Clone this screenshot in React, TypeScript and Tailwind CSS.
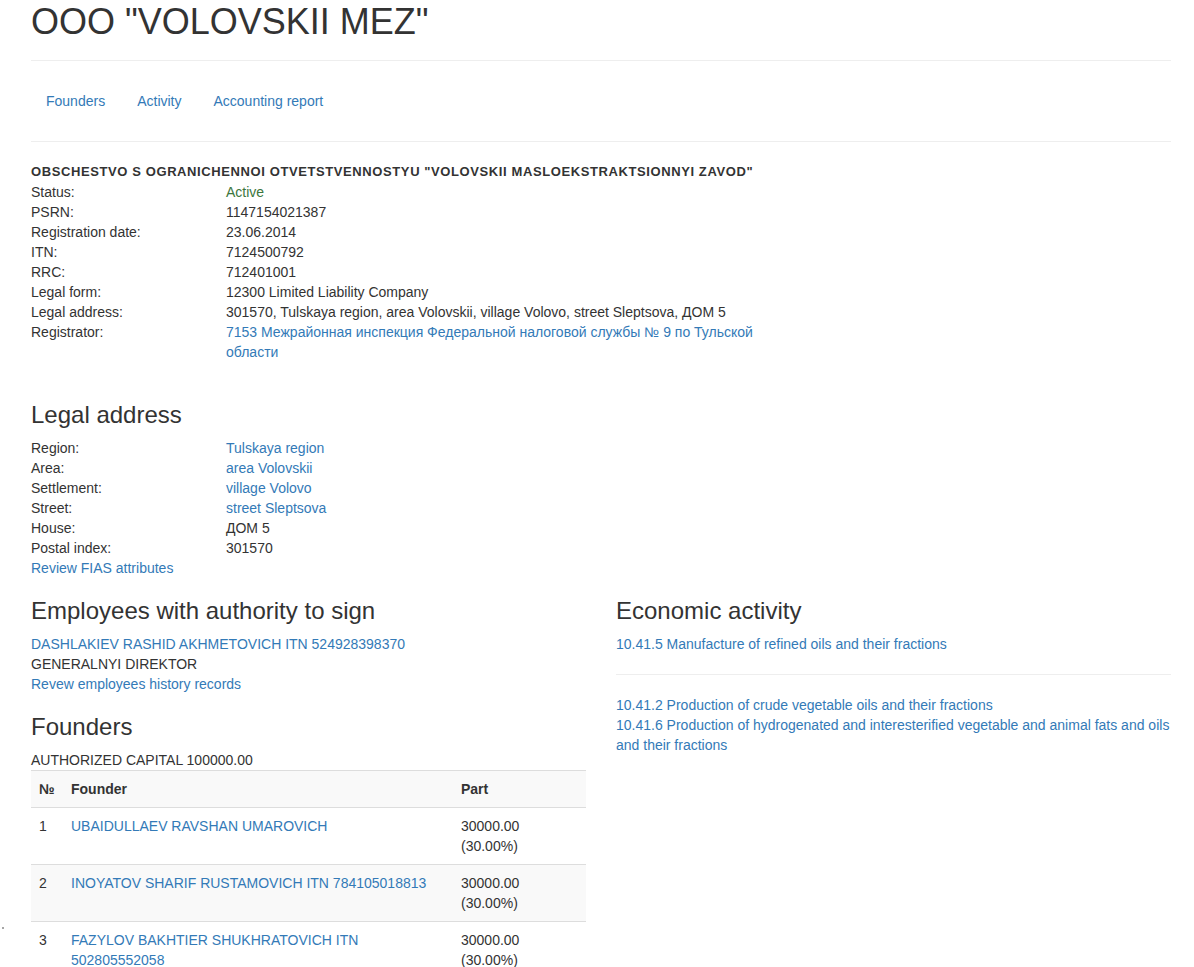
import React from "react";

const LINK = "text-[#337ab7]";

function Row({ label, children }: { label: string; children: React.ReactNode }) {
  return (
    <div className="flex">
      <div className="w-[195px] shrink-0">{label}</div>
      <div className="w-[556px]">{children}</div>
    </div>
  );
}

function H3({ children }: { children: React.ReactNode }) {
  return <h3 className="text-[24px] leading-[26px] mt-[20px] mb-[10px] font-normal text-[#333]">{children}</h3>;
}

export default function App() {
  const founders = [
    { n: 1, name: "UBAIDULLAEV RAVSHAN UMAROVICH" },
    { n: 2, name: "INOYATOV SHARIF RUSTAMOVICH ITN 784105018813" },
    { n: 3, name: "FAZYLOV BAKHTIER SHUKHRATOVICH ITN 502805552058" },
  ];
  return (
    <div
      className="relative bg-white min-h-[967px] text-[14px] leading-[20px] text-[#333]"
      style={{ fontFamily: '"Liberation Sans", Arial, "Noto Sans", sans-serif' }}
    >
      <div className="absolute left-[2px] top-[927px] w-[2px] h-[2px] rounded-full bg-[#888]" />
      <div className="pl-[31px] w-[1171px]">
        <h1 className="pt-[2px] text-[36px] leading-[39.6px] font-normal mb-[18px]">OOO "VOLOVSKII MEZ"</h1>
        <div className="border-t border-[#eee]" />
        <nav className="flex gap-[2px] my-[20px]">
          <a className={`${LINK} px-[15px] py-[10px]`}>Founders</a>
          <a className={`${LINK} px-[15px] py-[10px]`}>Activity</a>
          <a className={`${LINK} px-[15px] py-[10px]`}>Accounting report</a>
        </nav>
        <div className="border-t border-[#eee]" />

        <div className="mt-[20px] font-bold text-[13px] leading-[20px] tracking-[0.6px] whitespace-nowrap">
          OBSCHESTVO S OGRANICHENNOI OTVETSTVENNOSTYU "VOLOVSKII MASLOEKSTRAKTSIONNYI ZAVOD"
        </div>
        <div className="pb-[20px]">
          <Row label="Status:">
            <span className="text-[#3c763d]">Active</span>
          </Row>
          <Row label="PSRN:">1147154021387</Row>
          <Row label="Registration date:">23.06.2014</Row>
          <Row label="ITN:">7124500792</Row>
          <Row label="RRC:">712401001</Row>
          <Row label="Legal form:">12300 Limited Liability Company</Row>
          <Row label="Legal address:">301570, Tulskaya region, area Volovskii, village Volovo, street Sleptsova, ДОМ 5</Row>
          <Row label="Registrator:">
            <a className={LINK}>7153 Межрайонная инспекция Федеральной налоговой службы № 9 по Тульской области</a>
          </Row>
        </div>

        <H3>Legal address</H3>
        <div>
          <Row label="Region:"><a className={LINK}>Tulskaya region</a></Row>
          <Row label="Area:"><a className={LINK}>area Volovskii</a></Row>
          <Row label="Settlement:"><a className={LINK}>village Volovo</a></Row>
          <Row label="Street:"><a className={LINK}>street Sleptsova</a></Row>
          <Row label="House:">ДОМ 5</Row>
          <Row label="Postal index:">301570</Row>
          <div><a className={LINK}>Review FIAS attributes</a></div>
        </div>

        <div className="grid grid-cols-[555px_555px] gap-x-[30px]">
          <div>
            <H3>Employees with authority to sign</H3>
            <div><a className={LINK}>DASHLAKIEV RASHID AKHMETOVICH ITN 524928398370</a></div>
            <div>GENERALNYI DIREKTOR</div>
            <div><a className={LINK}>Revew employees history records</a></div>

            <H3>Founders</H3>
            <div>AUTHORIZED CAPITAL 100000.00</div>
            <table className="w-[555px] border-collapse table-fixed">
              <colgroup>
                <col className="w-[32px]" />
                <col />
                <col className="w-[133px]" />
              </colgroup>
              <tbody>
                <tr className="bg-[#f9f9f9]">
                  <td className="border-t border-[#ddd] p-[8px] font-bold align-top">№</td>
                  <td className="border-t border-[#ddd] p-[8px] font-bold align-top">Founder</td>
                  <td className="border-t border-[#ddd] p-[8px] font-bold align-top">Part</td>
                </tr>
                {founders.map((f, i) => (
                  <tr key={f.n} className={i % 2 === 1 ? "bg-[#f9f9f9]" : ""}>
                    <td className="border-t border-[#ddd] p-[8px] align-top">{f.n}</td>
                    <td className="border-t border-[#ddd] p-[8px] align-top">
                      <a className={LINK}>{f.name}</a>
                    </td>
                    <td className="border-t border-[#ddd] p-[8px] align-top">
                      30000.00
                      <br />
                      (30.00%)
                    </td>
                  </tr>
                ))}
              </tbody>
            </table>
          </div>
          <div>
            <H3>Economic activity</H3>
            <div><a className={LINK}>10.41.5 Manufacture of refined oils and their fractions</a></div>
            <div className="border-t border-[#eee] my-[20px]" />
            <div><a className={LINK}>10.41.2 Production of crude vegetable oils and their fractions</a></div>
            <div>
              <a className={LINK}>10.41.6 Production of hydrogenated and interesterified vegetable and animal fats and oils and their fractions</a>
            </div>
          </div>
        </div>
      </div>
    </div>
  );
}
